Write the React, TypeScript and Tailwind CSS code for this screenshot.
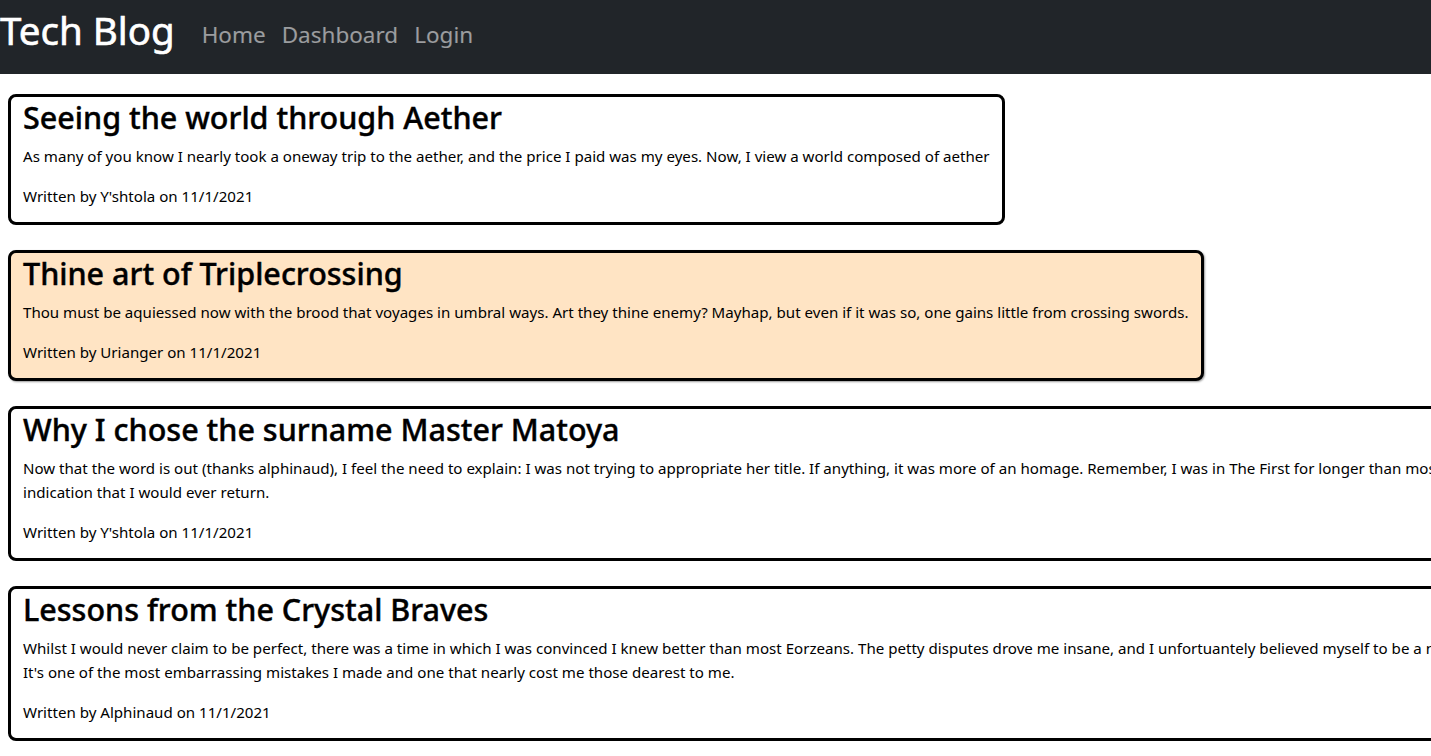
import React from 'react';

type Post = {
  title: string;
  body: React.ReactNode;
  author: string;
  date: string;
  highlight?: boolean;
};

const posts: Post[] = [
  {
    title: 'Seeing the world through Aether',
    body: 'As many of you know I nearly took a oneway trip to the aether, and the price I paid was my eyes. Now, I view a world composed of aether',
    author: "Y'shtola",
    date: '11/1/2021',
  },
  {
    title: 'Thine art of Triplecrossing',
    body: 'Thou must be aquiessed now with the brood that voyages in umbral ways. Art they thine enemy? Mayhap, but even if it was so, one gains little from crossing swords.',
    author: 'Urianger',
    date: '11/1/2021',
    highlight: true,
  },
  {
    title: 'Why I chose the surname Master Matoya',
    body: (
      <>
        Now that the word is out (thanks alphinaud), I feel the need to explain: I was not trying to appropriate her title. If anything, it was more of an homage. Remember, I was in The First for longer than most of you, and there was no
        <br />
        indication that I would ever return.
      </>
    ),
    author: "Y'shtola",
    date: '11/1/2021',
  },
  {
    title: 'Lessons from the Crystal Braves',
    body: (
      <>
        Whilst I would never claim to be perfect, there was a time in which I was convinced I knew better than most Eorzeans. The petty disputes drove me insane, and I unfortuantely believed myself to be a more capable leader.
        <br />
        It's one of the most embarrassing mistakes I made and one that nearly cost me those dearest to me.
      </>
    ),
    author: 'Alphinaud',
    date: '11/1/2021',
  },
];

const PostCard = ({ post }: { post: Post }) => (
  <div
    className={`w-fit border-[3px] border-black rounded-lg px-3 pt-px pb-[14px] ${
      post.highlight ? 'bg-[#ffe4c4] shadow-[1px_1px_2px_rgba(0,0,0,0.4)]' : 'bg-white'
    }`}
  >
    <h2 className="text-[30.5px] leading-[38px] font-medium mb-2 [-webkit-text-stroke:0.4px_#000]">{post.title}</h2>
    <p className="text-[15.1px] leading-6 mb-4 whitespace-nowrap">{post.body}</p>
    <p className="text-[15.1px] leading-6">
      Written by {post.author} on {post.date}
    </p>
  </div>
);

const App = () => {
  return (
    <div
      className="min-h-screen bg-white text-[#000] overflow-hidden"
      style={{ fontFamily: '"Noto Sans", "Open Sans", sans-serif' }}
    >
      <nav className="bg-[#212529] h-[74px] flex items-center">
        <a href="#" className="text-white text-[38.5px] leading-none mr-[19px] -mt-[13px] [-webkit-text-stroke:0.6px_#fff]">
          Tech Blog
        </a>
        <div className="flex items-center -mt-[4px]">
          <a href="#" className="px-2 text-[22.5px] text-white/55">Home</a>
          <a href="#" className="px-2 text-[22.5px] text-white/55">Dashboard</a>
          <a href="#" className="px-2 text-[22.5px] text-white/55">Login</a>
        </div>
      </nav>

      <main className="px-2 pt-5 flex flex-col gap-[25px]">
        {posts.map((post) => (
          <PostCard key={post.title} post={post} />
        ))}
      </main>
    </div>
  );
};

export default App;
